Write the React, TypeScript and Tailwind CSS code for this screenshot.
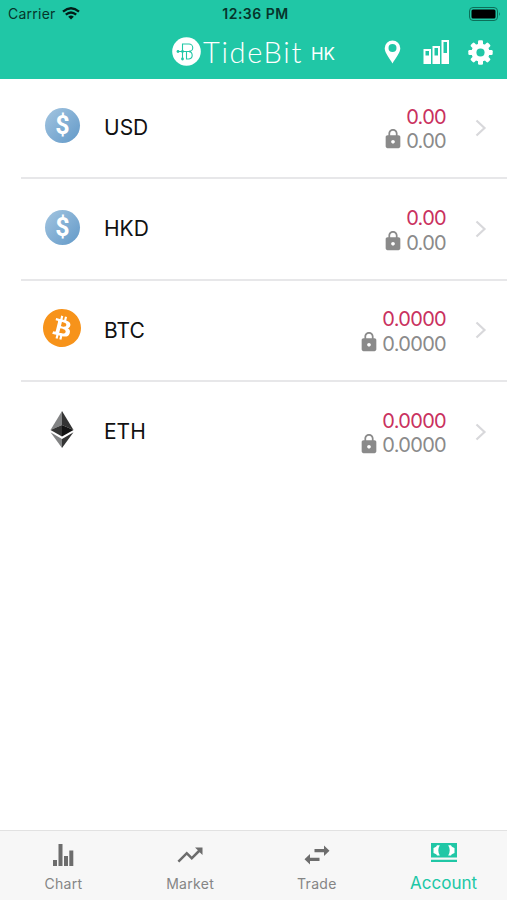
import type { ReactNode } from 'react';
import { MdLock, MdTrendingUp } from 'react-icons/md';
import { SiBitcoin } from 'react-icons/si';

interface Balance {
  code: string;
  available: string;
  locked: string;
  icon: ReactNode;
}

interface Tab {
  label: string;
  icon: ReactNode;
  active?: boolean;
}

function DollarCoin() {
  return (
    <span className="relative -top-[2px] flex size-[35px] items-center justify-center rounded-full bg-linear-to-br from-[#a3c5e0] to-[#6299c8] font-[Roboto] text-[25px] leading-none font-bold text-white">
      $
    </span>
  );
}

function BitcoinCoin() {
  return (
    <span className="relative -top-[2px] -left-px rounded-full bg-[radial-gradient(white_60%,transparent_61%)]">
      <SiBitcoin className="size-[38px] text-[#f7931a]" />
    </span>
  );
}

function EtherCoin() {
  return (
    <svg className="relative -top-[2px] -left-px h-[37px] w-[24px]" viewBox="0 0 24 37">
      <path d="M12 0L0.5 19L12 14Z" fill="#828384" />
      <path d="M12 0L23.5 19L12 14Z" fill="#343434" />
      <path d="M0.5 19L12 14V25.5Z" fill="#343434" />
      <path d="M23.5 19L12 14V25.5Z" fill="#131313" />
      <path d="M0.5 21.3L12 28V37Z" fill="#828384" />
      <path d="M23.5 21.3L12 28V37Z" fill="#343434" />
    </svg>
  );
}

const balances: Balance[] = [
  { code: 'USD', available: '0.00', locked: '0.00', icon: <DollarCoin /> },
  { code: 'HKD', available: '0.00', locked: '0.00', icon: <DollarCoin /> },
  { code: 'BTC', available: '0.0000', locked: '0.0000', icon: <BitcoinCoin /> },
  { code: 'ETH', available: '0.0000', locked: '0.0000', icon: <EtherCoin /> },
];

const tabs: Tab[] = [
  {
    label: 'Chart',
    icon: (
      <svg className="h-[24px] w-[22px]" viewBox="0 0 22 24" fill="currentColor">
        <path d="M1 17h4v6H1zM6.5 1h4v22h-4zM12 13h4v10h-4zM17.300 7.500h4V23h-4z" />
      </svg>
    ),
  },
  { label: 'Market', icon: <MdTrendingUp className="size-[30px]" /> },
  {
    label: 'Trade',
    icon: (
      <svg className="h-[20px] w-[26px]" viewBox="0 0 26 20" fill="currentColor">
        <path d="M10.500 4h9.500V0.500L25.500 5.800L20 11V7.300h-9.500z" />
        <path d="M15.500 12.700H6V9L0.500 14.200L6 19.500V16h9.500z" />
      </svg>
    ),
  },
  {
    label: 'Account',
    active: true,
    icon: (
      <svg className="h-[19px] w-[26px]" viewBox="0 0 26 19">
        <path d="M0 0h26v14.500H0zM0 16.800h26V19H0z" fill="currentColor" />
        <path d="M8.800 2.300H6C5.600 4 4 4.300 2.500 5v5c1.500.500 3 1 3.500 2.500h2.800C6.800 9.500 6.800 5.200 8.800 2.300z" fill="#fff" />
        <path d="M17.200 2.300H20c.400 1.700 2 2 3.500 2.700v5c-1.500.500-3 1-3.500 2.500h-2.800c2-3 2-7.300 0-10.200z" fill="#fff" />
      </svg>
    ),
  },
];

function StatusBar() {
  return (
    <div className="grid h-[27px] grid-cols-3 items-center px-2 text-[#06352b]">
      <div className="flex items-center gap-1.5 text-[14px] tracking-[0.25px]">
        Carrier
        <svg className="h-[13px] w-[18px]" viewBox="0 0 18 13" fill="none" stroke="#021c17" strokeWidth="2.300">
          <path d="M1 4.600Q9-2.200 17 4.600" />
          <path d="M3.800 7.700Q9 3.200 14.200 7.700" />
          <path d="M9 12.500L6.200 9.700Q9 7.400 11.800 9.700Z" fill="#021c17" stroke="none" />
        </svg>
      </div>
      <div className="pl-1 text-center text-[14px] font-semibold tracking-[0.5px]">12:36 PM</div>
      <div className="flex justify-end">
        <svg className="-mr-0.5 h-[14px] w-[32px]" viewBox="0 0 32 14">
          <rect x="0.500" y="0.500" width="28" height="13" rx="3.500" fill="none" stroke="#0c6f59" />
          <rect x="2.500" y="2.500" width="24" height="9" rx="1.500" fill="#000" />
          <path d="M30 5q1.800 2 0 4z" fill="#0c6f59" />
        </svg>
      </div>
    </div>
  );
}

function Header() {
  return (
    <header className="h-[79px] shrink-0 bg-[#20c7a6]">
      <StatusBar />
      <div className="flex h-[50px] items-center justify-between pr-3.5 pl-[172px] text-white">
        {/* Logo */}
        <div className="flex items-center">
          <svg className="relative -top-px size-[29px]" viewBox="0 0 29 29">
            <circle cx="14.500" cy="14.500" r="14.300" fill="#fff" />
            <g fill="none" stroke="#20c7a6" strokeWidth="1.100">
              <path d="M10.500 22V7H17a3.600 3.600 0 0 1 0 7.500H5.500M17 14.500a3.800 3.800 0 0 1 0 7.500h-2.500V14.500" />
            </g>
            <g fill="#20c7a6">
              <circle cx="6" cy="14.500" r="1.400" />
              <circle cx="10.500" cy="14.500" r="1.400" />
              <circle cx="10.500" cy="22" r="1.400" />
              <circle cx="18" cy="14.500" r="1" />
            </g>
          </svg>
          <span className="relative -top-px ml-0.5 font-[Lato] text-[29px] leading-none font-light tracking-[1.7px]">TideBit</span>
          <span className="relative top-[2px] ml-2 text-[17px] leading-none tracking-[-0.2px]">HK</span>
        </div>

        <div className="flex items-center">
          <svg className="h-[24px] w-[17px]" viewBox="0 0 17 24">
            <path
              d="M8.500 0.500A7.800 7.800 0 0 0 0.700 8.300C0.700 13 5.800 18.500 8.500 23.500C11.200 18.500 16.300 13 16.300 8.300A7.800 7.800 0 0 0 8.500 0.500ZM8.500 4a4 4 0 1 1 0 8a4 4 0 0 1 0-8Z"
              fill="#fff"
              fillRule="evenodd"
            />
          </svg>
          <svg className="ml-[22px] h-[24px] w-[27px]" viewBox="0 0 27 24">
            <path
              d="M0.500 9h7.500v15H0.500zM2.500 11v4.500H6V11zM9.500 6h7.500v18H9.500zM11.500 8v7.500H15V8zM18.500 0H26v24h-7.500zM20.500 2v11H24V2z"
              fill="#fff"
              fillRule="evenodd"
            />
          </svg>
          <svg className="ml-[18px] size-[25px]" viewBox="0 0 24 24">
            <g fill="#fff">
              <rect x="9.600" y="0.300" width="4.800" height="23.400" rx="1.200" />
              <rect x="9.600" y="0.300" width="4.800" height="23.400" rx="1.200" transform="rotate(45 12 12)" />
              <rect x="9.600" y="0.300" width="4.800" height="23.400" rx="1.200" transform="rotate(90 12 12)" />
              <rect x="9.600" y="0.300" width="4.800" height="23.400" rx="1.200" transform="rotate(135 12 12)" />
              <circle cx="12" cy="12" r="8.700" />
            </g>
            <circle cx="12" cy="12" r="3.900" fill="#20c7a6" />
          </svg>
        </div>
      </div>
    </header>
  );
}

function BalanceRow({ balance }: { balance: Balance }) {
  return (
    <li className="ml-[21px] flex h-[101.400px] items-center border-b-2 border-[#e7e7e9] pr-[20px] last:border-transparent">
      <div className="flex w-[83px] justify-center">{balance.icon}</div>
      <span className="text-[21px] text-[#111]">{balance.code}</span>
      <div className="ml-auto pt-[3px] text-right text-[20px] leading-[24.500px] tracking-[-0.7px]">
        <div className="text-[#c9305e]">{balance.available}</div>
        <div className="flex items-center justify-end gap-[2px] text-[#8a8a8a]">
          <MdLock className="relative -top-[2px] size-[22px]" />
          {balance.locked}
        </div>
      </div>
      <svg className="ml-[29px] h-[18px] w-[12px]" viewBox="0 0 12 18" fill="none" stroke="#d8d8db" strokeWidth="2.200">
        <path d="M1.500 1.500L9.500 9L1.500 16.500" />
      </svg>
    </li>
  );
}

function TabBar() {
  return (
    <nav className="grid h-[70px] shrink-0 grid-cols-4 border-t border-[#e2e2e2] bg-[#f7f7f7]">
      {tabs.map((tab) => (
        <button
          key={tab.label}
          className={`flex flex-col items-center ${tab.active ? 'text-[#20c7a6]' : 'text-[#6d6d6d]'}`}
        >
          <span className={`flex items-center justify-center ${tab.active ? 'h-[42px]' : 'h-[48px]'}`}>{tab.icon}</span>
          <span
            className={
              tab.active
                ? 'text-[17px] leading-5'
                : 'text-[14px] leading-[10px] tracking-[0.3px] text-[#858585]'
            }
          >
            {tab.label}
          </span>
        </button>
      ))}
    </nav>
  );
}

export default function App() {
  return (
    <div className="flex h-screen flex-col overflow-hidden bg-white font-[Inter,sans-serif]">
      <Header />
      <ul className="-mt-px flex-1">
        {balances.map((balance) => (
          <BalanceRow key={balance.code} balance={balance} />
        ))}
      </ul>
      <TabBar />
    </div>
  );
}
